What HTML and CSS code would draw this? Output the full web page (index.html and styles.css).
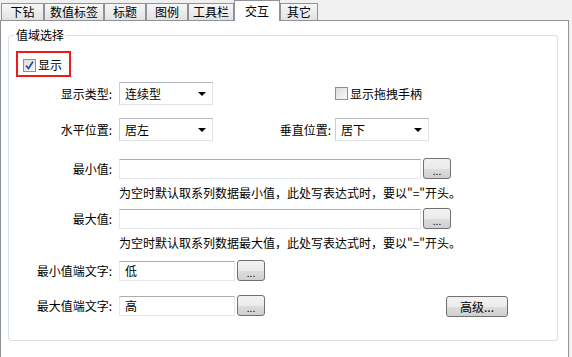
FILE: index.html
```html
<!DOCTYPE html>
<html lang="zh-CN">
<head>
    <meta charset="UTF-8">
    <title>交互</title>
    <link rel="stylesheet" href="styles.css">
</head>
<body>
    <div class="tabs">
        <div class="tab t1">下钻</div>
        <div class="tab t2">数值标签</div>
        <div class="tab t3">标题</div>
        <div class="tab t4">图例</div>
        <div class="tab t5">工具栏</div>
        <div class="tab t6 active">交互</div>
        <div class="tab t7">其它</div>
    </div>

    <div class="panel">
        <div class="group">
            <span class="legend">值域选择</span>

            <div class="show-box">
                <span class="box checked">
                    <svg width="11" height="11" viewBox="0 0 11 11"><path d="M2 5.5 L4.5 8.5 L9 1.5" fill="none" stroke="#2c4fb0" stroke-width="1.8"/></svg>
                </span>
                <span>显示</span>
            </div>

            <div class="row r1">
                <span class="lbl">显示类型:</span>
                <div class="select"><span>连续型</span><i class="arrow"></i></div>
                <span class="check drag"><span class="box"></span>显示拖拽手柄</span>
            </div>

            <div class="row r2">
                <span class="lbl">水平位置:</span>
                <div class="select"><span>居左</span><i class="arrow"></i></div>
                <span class="lbl lbl2">垂直位置:</span>
                <div class="select"><span>居下</span><i class="arrow"></i></div>
            </div>

            <div class="row r3">
                <span class="lbl">最小值:</span>
                <div class="input wide"></div>
                <button class="dots">...</button>
            </div>
            <div class="hint h1">为空时默认取系列数据最小值，此处写表达式时，要以"="开头。</div>

            <div class="row r4">
                <span class="lbl">最大值:</span>
                <div class="input wide"></div>
                <button class="dots">...</button>
            </div>
            <div class="hint h2">为空时默认取系列数据最大值，此处写表达式时，要以"="开头。</div>

            <div class="row r5">
                <span class="lbl">最小值端文字:</span>
                <div class="input short">低</div>
                <button class="dots">...</button>
            </div>

            <div class="row r6">
                <span class="lbl">最大值端文字:</span>
                <div class="input short">高</div>
                <button class="dots">...</button>
                <button class="advanced">高级...</button>
            </div>
        </div>
    </div>
</body>
</html>
```

FILE: styles.css
```css
body {
    margin: 0;
    padding: 0;
    font-family: "Noto Sans CJK SC", "Liberation Sans", sans-serif;
    font-size: 12px;
    line-height: 14px;
    color: #000;
    background: #f0f0f0;
    width: 572px;
    height: 357px;
    overflow: hidden;
}
.tabs {
    display: flex;
    align-items: flex-end;
    height: 20px;
    padding-left: 1px;
}
.tab {
    box-sizing: border-box;
    height: 17px;
    border: 1px solid #8f9296;
    border-bottom: none;
    background: linear-gradient(to bottom, #f7f7f7, #e2e2e2);
    text-align: center;
    line-height: 16px;
}
.t1 { width: 43px; }
.t2 { width: 60px; }
.t3 { width: 42px; }
.t4 { width: 42px; }
.t5 { width: 46px; }
.t6 { width: 46px; }
.t7 { width: 38px; }
.tab.active {
    height: 21px;
    margin-bottom: -1px;
    background: #fff;
    position: relative;
    z-index: 1;
    line-height: 20px;
    border-color: #8f9296;
}
.panel {
    box-sizing: border-box;
    width: 569px;
    height: 345px;
    background: #fff;
    border: 1px solid #8f9296;
    padding: 14px 10px 0 7px;
}
.group {
    position: relative;
    box-sizing: border-box;
    height: 306px;
    border: 1px solid #d5dfe5;
    border-radius: 3px;
    padding-top: 15px;
}
.legend {
    position: absolute;
    top: -8px;
    left: 5px;
    padding: 0 2px;
    background: #fff;
}
.show-box {
    box-sizing: border-box;
    display: flex;
    align-items: center;
    width: 55px;
    height: 26px;
    margin-left: 7px;
    padding: 2px 0 0 5px;
    border: 2px solid #f01818;
}
.show-box .box {
    margin-right: 2px;
}
.box {
    box-sizing: border-box;
    display: inline-flex;
    align-items: center;
    justify-content: center;
    width: 13px;
    height: 13px;
    border: 1px solid #8f8f8f;
    background: linear-gradient(135deg, #dcdcdc, #f8f8f8);
    flex: none;
}
.row {
    display: flex;
    align-items: center;
}
.lbl {
    width: 103px;
    margin-right: 7px;
    text-align: right;
    flex: none;
}
.lbl2 {
    width: 118px;
    margin-right: 4px;
}
.select {
    box-sizing: border-box;
    display: flex;
    align-items: center;
    justify-content: space-between;
    width: 94px;
    height: 23px;
    padding: 0 6px 0 5px;
    border: 1px solid #dfe3e8;
    border-top-color: #b5b9c0;
    border-left-color: #ccd0d5;
    background: #fff;
}
.arrow {
    width: 0;
    height: 0;
    border-left: 4px solid transparent;
    border-right: 4px solid transparent;
    border-top: 4px solid #000;
}
.check {
    display: flex;
    align-items: center;
}
.drag {
    margin-left: 122px;
}
.drag .box {
    margin-right: 2px;
}
.input {
    box-sizing: border-box;
    height: 20px;
    padding-left: 5px;
    line-height: 18px;
    border: 1px solid #e2e8ee;
    border-top-color: #abadb3;
    background: #fff;
}
.wide { width: 302px; }
.short { width: 116px; }
button {
    font-family: inherit;
    box-sizing: border-box;
    margin: 0;
    padding: 0;
    color: #000;
    border: 1px solid #707070;
    border-radius: 3px;
    background: linear-gradient(to bottom, #f2f2f2 0%, #ebebeb 50%, #dddddd 51%, #cfcfcf 100%);
    cursor: pointer;
}
.dots {
    width: 28px;
    height: 21px;
    margin-left: 2px;
    font-size: 10px;
    line-height: 19px;
    padding-top: 2px;
}
.advanced {
    width: 62px;
    height: 21px;
    margin-left: 181px;
    margin-top: 2px;
    font-size: 12px;
}
.hint {
    margin-left: 110px;
    height: 14px;
}
.r1 { margin-top: 5px; height: 23px; }
.r2 { margin-top: 13px; height: 23px; }
.r3 { margin-top: 17px; height: 21px; }
.h1 { margin-top: 7px; }
.r4 { margin-top: 8px; height: 21px; }
.h2 { margin-top: 7px; }
.r5 { margin-top: 10px; height: 21px; }
.r6 { margin-top: 14px; height: 21px; }
```
